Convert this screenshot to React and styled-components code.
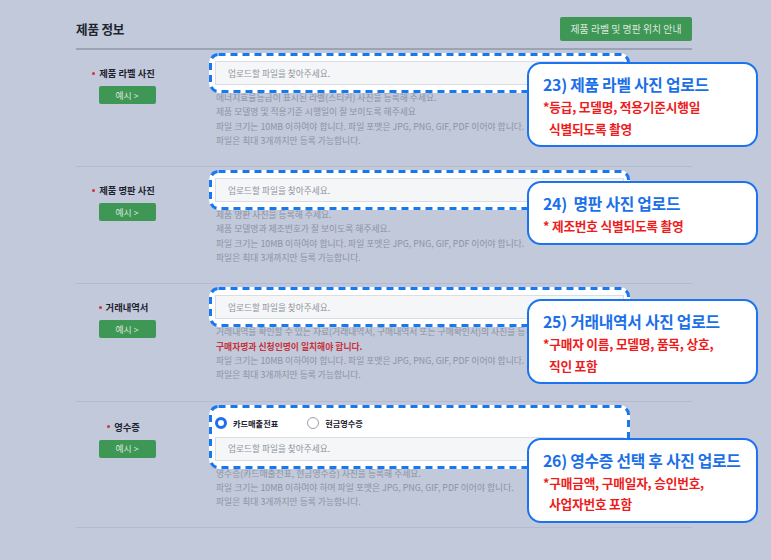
import styled, { createGlobalStyle } from 'styled-components';

const GlobalStyle = createGlobalStyle`
  html, body { margin: 0; padding: 0; }
  body {
    width: 771px;
    height: 560px;
    overflow: hidden;
    background: #c1c9da;
    font-family: "Noto Sans CJK KR", "Noto Sans", sans-serif;
  }
`;

const Page = styled.div`
  width: 616px;
  margin-left: 76px;
`;

// header
const Header = styled.div`
  display: flex;
  align-items: center;
  justify-content: space-between;
  height: 50px;
  padding-top: 9px;
  box-sizing: border-box;
  border-bottom: 2px solid #9ca3b2;
`;

const Title = styled.h2`
  margin: 0;
  font-size: 12.6px;
  font-weight: 700;
  color: #20242e;
  letter-spacing: -0.2px;
`;

const GreenButton = styled.button`
  border: none;
  border-radius: 2px;
  background: #3f9755;
  color: #dbe8dd;
  font-family: inherit;
  padding: 0;
  cursor: pointer;
`;

const GuideButton = styled(GreenButton)`
  width: 132px;
  height: 24px;
  font-size: 9.9px;
`;

// rows
const Row = styled.div`
  position: relative;
  display: grid;
  grid-template-columns: 102px 1fr;
  column-gap: 31px;
  padding: 3px 0 18px;
  border-bottom: 1px solid #b3bbcc;
`;

const LabelCell = styled.div`
  display: flex;
  flex-direction: column;
  align-items: center;
  padding-top: ${p => p.$offset}px;
`;

const Label = styled.div`
  display: flex;
  align-items: center;
  font-size: 9.3px;
  font-weight: 700;
  line-height: 14px;
  color: #1e2230;
  &::before {
    content: '';
    width: 3px;
    height: 3px;
    border-radius: 50%;
    background: #d0323c;
    margin-left: -7px;
    margin-right: 4px;
  }
`;

const ExampleButton = styled(GreenButton)`
  width: 57px;
  height: 18px;
  margin-top: 6px;
  font-size: 8.8px;
`;

const Field = styled.div`
  display: flex;
  flex-direction: column;
`;

const Highlight = styled.div`
  position: relative;
  z-index: 1;
  margin-right: 62px;
  padding: 8px 6px;
  background: #fff;
  border-radius: 10px;
  display: flex;
  flex-direction: column;
  gap: 4px;
`;

const DashFrame = styled.svg`
  position: absolute;
  inset: 0;
  width: 100%;
  height: 100%;
  overflow: visible;
  pointer-events: none;
  rect {
    x: 1.5px;
    y: 1.5px;
    width: calc(100% - 3px);
    height: calc(100% - 3px);
    rx: 8px;
    fill: none;
    stroke: #1878f0;
    stroke-width: 3px;
    stroke-dasharray: 7 5;
  }
`;

const FileInput = styled.div`
  height: 24px;
  box-sizing: border-box;
  border: 1px solid #d9dce2;
  background: #f5f6f8;
  display: flex;
  align-items: center;
  padding-left: 12px;
  font-size: 8.7px;
  color: #8e939c;
`;

const RadioRow = styled.div`
  height: 20px;
  display: flex;
  align-items: center;
  gap: 29px;
`;

const RadioItem = styled.label`
  display: flex;
  align-items: center;
  gap: 6px;
  font-size: 8.2px;
  font-weight: 700;
  color: #1e2230;
`;

const RadioDot = styled.span`
  width: 12px;
  height: 12px;
  box-sizing: border-box;
  border-radius: 50%;
  background: #fff;
  border: ${p => (p.$checked ? '3px solid #1b6ff0' : '1px solid #9a9ea6')};
`;

const Help = styled.div`
  padding-left: 7px;
  margin-top: -2px;
  font-size: 8.8px;
  line-height: 14.3px;
  color: #8d93a2;
  white-space: nowrap;
`;

const HelpLine = styled.div`
  color: ${p => (p.$alert ? '#c8323c' : 'inherit')};
  font-weight: ${p => (p.$alert ? 700 : 400)};
`;

// annotation callouts
const Callout = styled.div`
  position: absolute;
  left: 451px;
  top: ${p => p.$top}px;
  width: 231px;
  box-sizing: border-box;
  z-index: 2;
  background: #fff;
  border: 2px solid #1c73ef;
  border-radius: 14px;
  padding: 10px 8px 6px 14px;
`;

const CalloutTitle = styled.div`
  font-size: 15.8px;
  font-weight: 700;
  line-height: 22px;
  letter-spacing: -0.25px;
  color: #1b6fe8;
  white-space: pre;
`;

const CalloutNote = styled.div`
  font-size: 12.7px;
  font-weight: 700;
  line-height: 21.5px;
  letter-spacing: -0.2px;
  color: #ee1c1c;
  padding-left: ${p => (p.$indent ? 6 : 0)}px;
  white-space: pre;
`;

const sizeLine = '파일 크기는 10MB 이하여야 합니다. 파일 포맷은 JPG, PNG, GIF, PDF 이어야 합니다.';
const maxLine = '파일은 최대 3개까지만 등록 가능합니다.';

const sections = [
  {
    label: '제품 라벨 사진',
    help: [
      { text: '에너지효율등급이 표시된 라벨(스티커) 사진을 등록해 주세요.' },
      { text: '제품 모델명 및 적용기준 시행일이 잘 보이도록 해주세요' },
      { text: sizeLine },
      { text: maxLine },
    ],
    callout: {
      top: 12,
      title: '23) 제품 라벨 사진 업로드',
      notes: ['*등급, 모델명, 적용기준시행일', '식별되도록 촬영'],
    },
  },
  {
    label: '제품 명판 사진',
    help: [
      { text: '제품 명판 사진을 등록해 주세요.' },
      { text: '제품 모델명과 제조번호가 잘 보이도록 해주세요.' },
      { text: sizeLine },
      { text: maxLine },
    ],
    callout: {
      top: 14,
      title: '24)  명판 사진 업로드',
      notes: ['* 제조번호 식별되도록 촬영'],
    },
  },
  {
    label: '거래내역서',
    help: [
      { text: '거래내역을 확인할 수 있는 자료(거래내역서, 구매내역서 또는 구매확인서)의 사진을 등록해 주세요.' },
      { text: '구매자명과 신청인명이 일치해야 합니다.', alert: true },
      { text: sizeLine },
      { text: maxLine },
    ],
    callout: {
      top: 15,
      title: '25) 거래내역서 사진 업로드',
      notes: ['*구매자 이름, 모델명, 품목, 상호,', '직인 포함'],
    },
  },
  {
    label: '영수증',
    radios: true,
    labelOffset: 15,
    help: [
      { text: '영수증(카드매출전표, 현금영수증) 사진을 등록해 주세요.' },
      { text: '파일 크기는 10MB 이하여야 하며 파일 포맷은 JPG, PNG, GIF, PDF 이어야 합니다.' },
      { text: maxLine },
    ],
    callout: {
      top: 36,
      title: '26) 영수증 선택 후 사진 업로드',
      notes: ['*구매금액, 구매일자, 승인번호,', '사업자번호 포함'],
    },
  },
];

function App() {
  return (
    <Page>
      <GlobalStyle />
      <Header>
        <Title>제품 정보</Title>
        <GuideButton>제품 라벨 및 명판 위치 안내</GuideButton>
      </Header>

      {sections.map(s => (
        <Row key={s.label}>
          <LabelCell $offset={s.labelOffset || 13}>
            <Label>{s.label}</Label>
            <ExampleButton>예시 &gt;</ExampleButton>
          </LabelCell>
          <Field>
            <Highlight>
              <DashFrame><rect /></DashFrame>
              {s.radios && (
                <RadioRow>
                  <RadioItem><RadioDot $checked />카드매출전표</RadioItem>
                  <RadioItem><RadioDot />현금영수증</RadioItem>
                </RadioRow>
              )}
              <FileInput>업로드할 파일을 찾아주세요.</FileInput>
            </Highlight>
            <Help>
              {s.help.map((h, i) => (
                <HelpLine key={i} $alert={h.alert}>{h.text}</HelpLine>
              ))}
            </Help>
          </Field>
          <Callout $top={s.callout.top}>
            <CalloutTitle>{s.callout.title}</CalloutTitle>
            {s.callout.notes.map((n, i) => (
              <CalloutNote key={i} $indent={i > 0}>{n}</CalloutNote>
            ))}
          </Callout>
        </Row>
      ))}
    </Page>
  );
}

export default App;
